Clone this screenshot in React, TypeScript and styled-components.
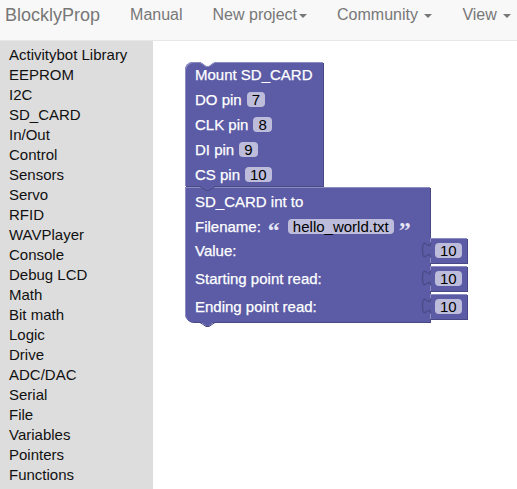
import React from "react";
import styled, { createGlobalStyle } from "styled-components";

const BLOCK = "#5b5ba6";
const LIGHT = "#8c8cc1";
const DARK = "#494985";

const Global = createGlobalStyle`
  html, body { margin: 0; padding: 0; }
  body {
    font-family: "Liberation Sans", Arial, Helvetica, sans-serif;
    background: #fff;
  }
`;

const Page = styled.div`
  height: 100vh;
  display: flex;
  flex-direction: column;
  overflow: hidden;
`;

const NavBar = styled.nav`
  flex: none;
  height: 41px;
  box-sizing: border-box;
  background: #f8f8f8;
  border-bottom: 1px solid #e7e7e7;
  display: flex;
  align-items: flex-start;
  padding-left: 5px;
  white-space: nowrap;
`;

const Brand = styled.a`
  font-size: 18px;
  line-height: 20px;
  color: #777;
  padding: 5px 15px 0 0;
  text-decoration: none;
`;

const NavLink = styled.a`
  font-size: 16px;
  line-height: 20px;
  color: #777;
  padding: 5px 15px 0;
  text-decoration: none;
`;

const Caret = styled.span`
  display: inline-block;
  width: 0;
  height: 0;
  margin-left: 2px;
  vertical-align: middle;
  border-top: 4px solid;
  border-right: 4px solid transparent;
  border-left: 4px solid transparent;
`;

const Body = styled.div`
  flex: 1;
  display: flex;
  min-height: 0;
`;

const Sidebar = styled.ul`
  flex: none;
  width: 153px;
  box-sizing: border-box;
  margin: 0;
  padding: 4px 0 0 9px;
  list-style: none;
  background: #ddd;
`;

const SideItem = styled.li`
  font-size: 15px;
  line-height: 20px;
  color: #111;
  white-space: nowrap;
`;

const Workspace = styled.div`
  flex: 1;
  background: #fff;
  padding: 21px 0 0 32px;
`;

const Stack = styled.div`
  display: flex;
  flex-direction: column;
  align-items: flex-start;
  gap: 1px;
`;

const Block = styled.div<{ $width: number; $radius: string; $padTop?: number }>`
  position: relative;
  width: ${(p) => p.$width}px;
  box-sizing: border-box;
  padding-top: ${(p) => p.$padTop ?? 0}px;
  background: ${BLOCK};
  border-radius: ${(p) => p.$radius};
  box-shadow: 1px 1px 0 ${DARK}, inset 1px 1px 0 ${LIGHT};
  color: #fff;
`;

const Row = styled.div<{ $h: number; $top?: boolean }>`
  display: flex;
  align-items: ${(p) => (p.$top ? "flex-start" : "center")};
  height: ${(p) => p.$h}px;
  padding-left: 10px;
  gap: 5px;
  font-size: 15px;
  line-height: 25px;
  white-space: nowrap;
  -webkit-text-stroke: 0.25px #fff;
`;

const Field = styled.span`
  display: inline-block;
  height: 15px;
  line-height: 15px;
  padding: 0 5px;
  border-radius: 4px;
  background: rgba(255, 255, 255, 0.6);
  color: #000;
  font-size: 15px;
  -webkit-text-stroke: 0;
`;

const Quote = styled.span<{ $ml: number; $mr: number }>`
  display: inline-block;
  width: 12px;
  margin: 0 ${(p) => p.$mr}px 0 ${(p) => p.$ml}px;
  font-family: "Liberation Serif", serif;
  font-size: 24px;
  font-weight: bold;
  line-height: 20px;
  color: #e4e4f4;
  -webkit-text-stroke: 0;
  transform: translateY(4px);
`;

const ValueBlock = styled.div`
  position: relative;
  margin-left: auto;
  margin-right: -37px;
  width: 37px;
  height: 25px;
  box-sizing: border-box;
  padding-left: 5px;
  display: flex;
  align-items: center;
  background: ${BLOCK};
  box-shadow: 1px 1px 0 ${DARK}, inset 1px 1px 0 ${LIGHT};
`;

const TabSvg = styled.svg`
  position: absolute;
  left: -8px;
  top: 4px;
  overflow: visible;
`;

const NotchSvg = styled.svg<{ $top: string }>`
  position: absolute;
  left: 15px;
  top: ${(p) => p.$top};
  z-index: 1;
  overflow: visible;
`;

const PuzzleTab = () => (
  <TabSvg width="10" height="17" viewBox="0 0 10 17">
    <path d="M10,0.5 H8.5 c0,10 -8,-8 -8,7.5 s8,-2.5 8,7.5 H10 Z" fill={BLOCK} />
    <path
      d="M8.5,0.5 c0,10 -8,-8 -8,7.5 s8,-2.5 8,7.5"
      fill="none"
      stroke={DARK}
      strokeWidth="1.2"
    />
  </TabSvg>
);

const TopNotch = () => (
  <NotchSvg $top="0" width="16" height="6" viewBox="0 0 16 6">
    <path d="M0,-0.5 L6,4 H9 L15,-0.5 Z" fill="#fff" />
    <path d="M0,0.5 L6,4.5 H9 L15,0.5" fill="none" stroke={LIGHT} strokeWidth="1" />
  </NotchSvg>
);

const BottomTab = () => (
  <NotchSvg $top="100%" width="16" height="6" viewBox="0 0 16 6">
    <path d="M0,-0.5 L6,4 H9 L15,-0.5 Z" fill={BLOCK} />
    <path d="M0,0.5 L6,4.5 H9 L15,0.5" fill="none" stroke={DARK} strokeWidth="1" />
  </NotchSvg>
);

const ValueInput = ({ value }: { value: string }) => (
  <ValueBlock>
    <PuzzleTab />
    <Field>{value}</Field>
  </ValueBlock>
);

const categories = [
  "Activitybot Library",
  "EEPROM",
  "I2C",
  "SD_CARD",
  "In/Out",
  "Control",
  "Sensors",
  "Servo",
  "RFID",
  "WAVPlayer",
  "Console",
  "Debug LCD",
  "Math",
  "Bit math",
  "Logic",
  "Drive",
  "ADC/DAC",
  "Serial",
  "File",
  "Variables",
  "Pointers",
  "Functions",
];

const pins: [string, string][] = [
  ["DO pin", "7"],
  ["CLK pin", "8"],
  ["DI pin", "9"],
  ["CS pin", "10"],
];

const valueRows = ["Value:", "Starting point read:", "Ending point read:"];

export default function App() {
  return (
    <Page>
      <Global />
      <NavBar>
        <Brand>BlocklyProp</Brand>
        <NavLink>Manual</NavLink>
        <NavLink>
          New project<Caret />
        </NavLink>
        <NavLink>
          Community <Caret />
        </NavLink>
        <NavLink>
          View <Caret />
        </NavLink>
      </NavBar>
      <Body>
        <Sidebar>
          {categories.map((c) => (
            <SideItem key={c}>{c}</SideItem>
          ))}
        </Sidebar>
        <Workspace>
          <Stack>
            <Block $width={138} $radius="8px 0 0 0">
              <TopNotch />
              <Row $h={25}>Mount SD_CARD</Row>
              {pins.map(([label, v], i) => (
                <Row key={label} $h={i === pins.length - 1 ? 24 : 25}>
                  <span>{label}</span>
                  <Field>{v}</Field>
                </Row>
              ))}
              <BottomTab />
            </Block>
            <Block $width={245} $radius="0 0 0 8px" $padTop={2}>
              <Row $h={25}>SD_CARD int to</Row>
              <Row $h={24}>
                <span>Filename:</span>
                <Quote $ml={2} $mr={3}>“</Quote>
                <Field>hello_world.txt</Field>
                <Quote $ml={0} $mr={0}>”</Quote>
              </Row>
              {valueRows.map((label) => (
                <Row key={label} $h={28} $top>
                  <span>{label}</span>
                  <ValueInput value="10" />
                </Row>
              ))}
              <BottomTab />
            </Block>
          </Stack>
        </Workspace>
      </Body>
    </Page>
  );
}
